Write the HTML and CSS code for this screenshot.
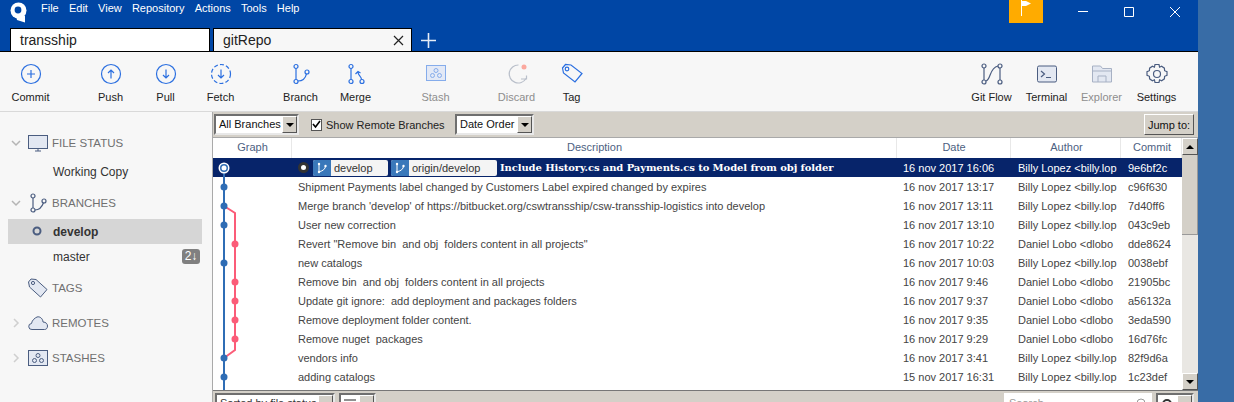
FILE: index.html
```html
<!DOCTYPE html>
<html lang="en">
<head>
  <meta charset="UTF-8">
  <title>gitRepo - Sourcetree</title>
  <link rel="stylesheet" href="styles.css">
</head>
<body>
  <div class="window">
    <header class="titlebar">
      <div class="menubar">
        <svg class="logo" width="17" height="21" viewBox="0 0 17 21"><circle cx="8.500" cy="8.500" r="8" fill="#fff"/><path d="M6 14h9v6.500L7 18z" fill="#fff"/><circle cx="8" cy="8" r="3.400" fill="#0046a5"/></svg>
        <nav class="menu">
          <span>File</span><span>Edit</span><span>View</span><span>Repository</span><span>Actions</span><span>Tools</span><span>Help</span>
        </nav>
        <div class="flag">
          <svg width="12" height="16" viewBox="0 0 12 16"><path d="M1.500 0v16" stroke="#fff" fill="none"/><path d="M2 1h4l5 2.500L6 6H2z" fill="#fff"/></svg>
        </div>
        <div class="winbtns">
          <svg width="12" height="12" viewBox="0 0 12 12"><path d="M1 5.500h10" stroke="#fff" fill="none"/></svg>
          <svg width="12" height="12" viewBox="0 0 12 12"><path d="M1.500 1.500h9v9h-9z" stroke="#fff" fill="none"/></svg>
          <svg width="12" height="12" viewBox="0 0 12 12"><path d="M1 1l10 10M11 1L1 11" stroke="#fff" fill="none"/></svg>
        </div>
      </div>
      <div class="tabs">
        <div class="tab">transship</div>
        <div class="tab tab-active">gitRepo
          <svg width="11" height="11" viewBox="0 0 11 11"><path d="M1 1l9 9M10 1l-9 9" stroke="#222" stroke-width="1.200" fill="none"/></svg>
        </div>
        <svg class="tab-add" width="15" height="15" viewBox="0 0 15 15"><path d="M7.500 0v15M0 7.500h15" stroke="#e6edf7" stroke-width="1.600" fill="none"/></svg>
      </div>
    </header>

    <div class="toolbar">
      <div class="tool">
        <svg width="22" height="22" viewBox="0 0 22 22"><circle cx="11" cy="11" r="9.500" class="ic-blue"/><path d="M11 7v8M7 11h8" class="ic-blue"/></svg>
        <span>Commit</span>
      </div>
      <div class="tool group-start">
        <svg width="22" height="22" viewBox="0 0 22 22"><circle cx="11" cy="11" r="9.500" class="ic-blue"/><path d="M11 15.500v-8M8 10l3-3 3 3" class="ic-blue"/></svg>
        <span>Push</span>
      </div>
      <div class="tool">
        <svg width="22" height="22" viewBox="0 0 22 22"><circle cx="11" cy="11" r="9.500" class="ic-blue"/><path d="M11 6.500v8M8 12l3 3 3-3" class="ic-blue"/></svg>
        <span>Pull</span>
      </div>
      <div class="tool">
        <svg width="22" height="22" viewBox="0 0 22 22"><circle cx="11" cy="11" r="9.500" class="ic-blue" stroke-dasharray="4 2.200"/><path d="M11 6.500v8M8 12l3 3 3-3" class="ic-blue"/></svg>
        <span>Fetch</span>
      </div>
      <div class="tool group-start">
        <svg width="22" height="22" viewBox="0 0 22 22"><circle cx="6" cy="3.500" r="2" class="ic-blue"/><circle cx="6" cy="18.500" r="2" class="ic-blue"/><circle cx="17" cy="9" r="2" class="ic-blue"/><path d="M6 5.500v11M8 18c5 0 7.500-3 8.500-7.200" class="ic-blue"/></svg>
        <span>Branch</span>
      </div>
      <div class="tool">
        <svg width="22" height="22" viewBox="0 0 22 22"><circle cx="6" cy="3.500" r="2" class="ic-blue"/><circle cx="6" cy="18.500" r="2" class="ic-blue"/><circle cx="17" cy="18.500" r="2" class="ic-blue"/><path d="M6 5.500v11M16.500 16.500c0-3-3-3.500-3.500-7M10.500 11l2.500-2.500 2.500 1.500" class="ic-blue"/></svg>
        <span>Merge</span>
      </div>
      <div class="tool group-start tool-off">
        <svg width="22" height="22" viewBox="0 0 22 22"><rect x="1.500" y="2.500" width="19" height="15" fill="#e3e9f6" stroke="#85aceb"/><circle cx="11" cy="7.500" r="2" fill="none" stroke="#85aceb"/><circle cx="7.500" cy="12.500" r="2" fill="none" stroke="#85aceb"/><circle cx="14.500" cy="12.500" r="2" fill="none" stroke="#85aceb"/></svg>
        <span>Stash</span>
      </div>
      <div class="tool tool-off tool-discard">
        <svg width="22" height="22" viewBox="0 0 22 22"><path d="M12.500 2a9 9 0 1 0 7.500 13.500" fill="none" stroke="#b9bfca" stroke-width="1.200"/><path d="M15 16h5.500v-3.500" fill="none" stroke="#b9bfca" stroke-width="1.200"/><circle cx="18" cy="4" r="2.500" fill="#fba89e"/></svg>
        <span>Discard</span>
      </div>
      <div class="tool tool-tag">
        <svg width="22" height="22" viewBox="0 0 22 22"><path d="M1.500 5l3-3.500 5.500.5 11 8.500-7 8.500L2.500 10z" class="ic-blue"/><circle cx="6" cy="6" r="1.800" class="ic-blue"/></svg>
        <span>Tag</span>
      </div>
      <div class="tool tool-right">
        <svg width="22" height="22" viewBox="0 0 22 22"><circle cx="3" cy="3" r="2" class="ic-slate"/><circle cx="3" cy="19" r="2" class="ic-slate"/><circle cx="19" cy="3" r="2" class="ic-slate"/><circle cx="19" cy="19" r="2" class="ic-slate"/><path d="M3 5v12M19 5v12M5 18c5-1 3-13 12-15" class="ic-slate"/></svg>
        <span>Git Flow</span>
      </div>
      <div class="tool">
        <svg width="22" height="22" viewBox="0 0 22 22"><rect x="1.500" y="3" width="19" height="16" rx="1.500" fill="#e3e8f2" stroke="#4b5d80"/><path d="M5 8l3.500 3L5 14M10 14.500h5" class="ic-slate"/></svg>
        <span>Terminal</span>
      </div>
      <div class="tool tool-off">
        <svg width="22" height="22" viewBox="0 0 22 22"><path d="M1.500 3h8l2 2.500h9V19h-19z" fill="#e3e8f2" stroke="#a7b1c4"/><path d="M1.500 8h19M7 19v-6h8v6" fill="none" stroke="#a7b1c4"/></svg>
        <span>Explorer</span>
      </div>
      <div class="tool">
        <svg width="22" height="22" viewBox="0 0 22 22"><path d="M9 1.500h4l.6 2.700 2-.9 2.800 1.900.2 2.500 2.400 1v3.600l-2.400 1-.2 2.500-2.800 1.900-2-.9-.6 2.700H9l-.6-2.700-2 .9-2.800-1.900-.2-2.500-2.400-1V8.700l2.400-1 .2-2.500 2.800-1.900 2 .9z" class="ic-slate"/><circle cx="11" cy="11" r="3.500" class="ic-slate"/></svg>
        <span>Settings</span>
      </div>
    </div>

    <div class="workspace">
      <aside class="sidebar">
        <div class="side-head side-first">
          <svg class="chev" width="10" height="10" viewBox="0 0 10 10"><path d="M1 3l4 4 4-4" stroke="#b5b5b5" stroke-width="1.500" fill="none"/></svg>
          <svg width="20" height="17" viewBox="0 0 20 17"><rect x=".5" y=".5" width="19" height="13" fill="#e3e8f2" stroke="#4b5d80"/><path d="M7 16h6M10 14v2" stroke="#4b5d80" fill="none"/></svg>
          <span>FILE STATUS</span>
        </div>
        <div class="side-item">Working Copy</div>
        <div class="side-head side-branches">
          <svg class="chev" width="10" height="10" viewBox="0 0 10 10"><path d="M1 3l4 4 4-4" stroke="#b5b5b5" stroke-width="1.500" fill="none"/></svg>
          <svg width="20" height="20" viewBox="0 0 20 20"><circle cx="5" cy="3" r="2" class="ic-slate"/><circle cx="5" cy="17" r="2" class="ic-slate"/><circle cx="16" cy="8" r="2" class="ic-slate"/><path d="M5 5v10M7 17c4 0 7-3 8.500-7.200" class="ic-slate"/></svg>
          <span>BRANCHES</span>
        </div>
        <div class="side-item side-current">
          <svg class="cur-dot" width="10" height="10" viewBox="0 0 10 10"><circle cx="5" cy="5" r="3.500" fill="none" stroke="#4b5d80" stroke-width="2"/></svg>
          develop
        </div>
        <div class="side-item side-master">master <span class="badge">2↓</span></div>
        <div class="side-head side-tags">
          <svg width="20" height="20" viewBox="0 0 20 20"><path d="M.5 4L3 1l5 .5 11 10-6.500 7.500L1.500 9z" fill="#e3e8f2" stroke="#4b5d80"/><circle cx="5" cy="5" r="1.600" fill="none" stroke="#4b5d80"/></svg>
          <span>TAGS</span>
        </div>
        <div class="side-head side-next">
          <svg class="chev" width="10" height="10" viewBox="0 0 10 10"><path d="M3 1l4 4-4 4" stroke="#cfcfcf" stroke-width="1.500" fill="none"/></svg>
          <svg width="20" height="14" viewBox="0 0 20 14"><path d="M4 13.500a3 3 0 0 1-.5-6C4 4 7 2 9 1c3-1 6 2 6 5 3 0 4.500 2 4.500 4s-1 3.500-3 3.500z" fill="#e3e8f2" stroke="#4b5d80"/></svg>
          <span>REMOTES</span>
        </div>
        <div class="side-head side-next">
          <svg class="chev" width="10" height="10" viewBox="0 0 10 10"><path d="M3 1l4 4-4 4" stroke="#cfcfcf" stroke-width="1.500" fill="none"/></svg>
          <svg width="20" height="16" viewBox="0 0 20 16"><rect x=".5" y=".5" width="19" height="15" fill="#e3e8f2" stroke="#4b5d80"/><circle cx="10" cy="5.500" r="2" fill="none" stroke="#4b5d80"/><circle cx="6.500" cy="10.500" r="2" fill="none" stroke="#4b5d80"/><circle cx="13.500" cy="10.500" r="2" fill="none" stroke="#4b5d80"/></svg>
          <span>STASHES</span>
        </div>
      </aside>

      <main class="history">
        <div class="filterbar">
          <div class="combo combo-branches">All Branches<i class="combo-btn"></i></div>
          <label class="check"><i class="check-box"><svg width="9" height="9" viewBox="0 0 9 9"><path d="M1 4l2.500 3L8 1" stroke="#000" stroke-width="1.600" fill="none"/></svg></i>Show Remote Branches</label>
          <div class="combo combo-order">Date Order<i class="combo-btn"></i></div>
          <button class="jump">Jump to:</button>
        </div>

        <div class="log">
          <div class="log-main">
            <div class="row row-head">
              <div class="col-graph">Graph</div>
              <div class="col-desc">Description</div>
              <div class="col-date">Date</div>
              <div class="col-author">Author</div>
              <div class="col-commit">Commit</div>
            </div>

            <div class="rows">
              <svg class="graph" width="40" height="234" viewBox="0 0 40 234">
                <path d="M12 10v224" stroke="#2f6db5" stroke-width="2" fill="none"/>
                <path d="M12 48l11 7v137l-11 8" stroke="#fb5c78" stroke-width="2" fill="none"/>
                <circle cx="12" cy="10" r="5.500" fill="#fff"/><circle cx="12" cy="10" r="4" fill="#2f6db5"/><circle cx="12" cy="10" r="2.500" fill="#fff"/>
                <circle cx="12" cy="29" r="3.500" fill="#2f6db5"/><circle cx="12" cy="48" r="3.500" fill="#2f6db5"/><circle cx="12" cy="67" r="3.500" fill="#2f6db5"/>
                <circle cx="23" cy="86" r="3.500" fill="#fb5c78"/><circle cx="12" cy="105" r="3.500" fill="#2f6db5"/><circle cx="23" cy="124" r="3.500" fill="#fb5c78"/>
                <circle cx="23" cy="143" r="3.500" fill="#fb5c78"/><circle cx="23" cy="162" r="3.500" fill="#fb5c78"/><circle cx="23" cy="181" r="3.500" fill="#fb5c78"/>
                <circle cx="12" cy="200" r="3.500" fill="#2f6db5"/><circle cx="12" cy="219" r="3.500" fill="#2f6db5"/>
              </svg>

              <div class="row row-sel">
                <div class="col-graph"></div>
                <div class="col-desc">
                  <i class="head-dot"></i>
                  <span class="ref"><i class="ref-ic"><svg width="12" height="12" viewBox="0 0 12 12"><circle cx="3" cy="2" r="1.200" fill="#fff"/><circle cx="3" cy="10" r="1.200" fill="#fff"/><circle cx="9.500" cy="4" r="1.200" fill="#fff"/><path d="M3 2v8M9.500 4c0 3-3 5-5.500 5.500" stroke="#fff" fill="none"/></svg></i>develop</span>
                  <span class="ref ref-wide"><i class="ref-ic"><svg width="12" height="12" viewBox="0 0 12 12"><circle cx="3" cy="2" r="1.200" fill="#fff"/><circle cx="3" cy="10" r="1.200" fill="#fff"/><circle cx="9.500" cy="4" r="1.200" fill="#fff"/><path d="M3 2v8M9.500 4c0 3-3 5-5.500 5.500" stroke="#fff" fill="none"/></svg></i>origin/develop</span>
                  <b class="subject">Include History.cs and Payments.cs to Model from obj folder</b>
                </div>
                <div class="col-date">16 nov 2017 16:06</div>
                <div class="col-author">Billy Lopez &lt;billy.lop</div>
                <div class="col-commit">9e6bf2c</div>
              </div>
              <div class="row">
                <div class="col-graph"></div>
                <div class="col-desc">Shipment Payments label changed by Customers Label expired changed by expires</div>
                <div class="col-date">16 nov 2017 13:17</div>
                <div class="col-author">Billy Lopez &lt;billy.lop</div>
                <div class="col-commit">c96f630</div>
              </div>
              <div class="row">
                <div class="col-graph"></div>
                <div class="col-desc">Merge branch 'develop' of https://bitbucket.org/cswtransship/csw-transship-logistics into develop</div>
                <div class="col-date">16 nov 2017 13:11</div>
                <div class="col-author">Billy Lopez &lt;billy.lop</div>
                <div class="col-commit">7d40ff6</div>
              </div>
              <div class="row">
                <div class="col-graph"></div>
                <div class="col-desc">User new correction</div>
                <div class="col-date">16 nov 2017 13:10</div>
                <div class="col-author">Billy Lopez &lt;billy.lop</div>
                <div class="col-commit">043c9eb</div>
              </div>
              <div class="row">
                <div class="col-graph"></div>
                <div class="col-desc">Revert "Remove bin  and obj  folders content in all projects"</div>
                <div class="col-date">16 nov 2017 10:22</div>
                <div class="col-author">Daniel Lobo &lt;dlobo</div>
                <div class="col-commit">dde8624</div>
              </div>
              <div class="row">
                <div class="col-graph"></div>
                <div class="col-desc">new catalogs</div>
                <div class="col-date">16 nov 2017 10:03</div>
                <div class="col-author">Billy Lopez &lt;billy.lop</div>
                <div class="col-commit">0038ebf</div>
              </div>
              <div class="row">
                <div class="col-graph"></div>
                <div class="col-desc">Remove bin  and obj  folders content in all projects</div>
                <div class="col-date">16 nov 2017 9:46</div>
                <div class="col-author">Daniel Lobo &lt;dlobo</div>
                <div class="col-commit">21905bc</div>
              </div>
              <div class="row">
                <div class="col-graph"></div>
                <div class="col-desc">Update git ignore:  add deployment and packages folders</div>
                <div class="col-date">16 nov 2017 9:37</div>
                <div class="col-author">Daniel Lobo &lt;dlobo</div>
                <div class="col-commit">a56132a</div>
              </div>
              <div class="row">
                <div class="col-graph"></div>
                <div class="col-desc">Remove deployment folder content.</div>
                <div class="col-date">16 nov 2017 9:35</div>
                <div class="col-author">Daniel Lobo &lt;dlobo</div>
                <div class="col-commit">3eda590</div>
              </div>
              <div class="row">
                <div class="col-graph"></div>
                <div class="col-desc">Remove nuget  packages</div>
                <div class="col-date">16 nov 2017 9:29</div>
                <div class="col-author">Daniel Lobo &lt;dlobo</div>
                <div class="col-commit">16d76fc</div>
              </div>
              <div class="row">
                <div class="col-graph"></div>
                <div class="col-desc">vendors info</div>
                <div class="col-date">16 nov 2017 3:41</div>
                <div class="col-author">Billy Lopez &lt;billy.lop</div>
                <div class="col-commit">82f9d6a</div>
              </div>
              <div class="row">
                <div class="col-graph"></div>
                <div class="col-desc">adding catalogs</div>
                <div class="col-date">15 nov 2017 16:31</div>
                <div class="col-author">Billy Lopez &lt;billy.lop</div>
                <div class="col-commit">1c23def</div>
              </div>
            </div>
          </div>

          <div class="scroll">
            <div class="scroll-btn"><i class="arrow-up"></i></div>
            <div class="scroll-thumb"></div>
            <div class="scroll-track"></div>
            <div class="scroll-btn"><i class="arrow-down"></i></div>
          </div>
        </div>

        <div class="bottombar">
          <div class="combo combo-filter">Sorted by file status<i class="combo-btn"></i></div>
          <div class="combo combo-view"><svg width="12" height="10" viewBox="0 0 12 10"><path d="M0 1h12M0 5h12M0 9h12" stroke="#222" fill="none"/></svg><i class="combo-btn"></i></div>
          <div class="search">Search
            <svg width="10" height="10" viewBox="0 0 10 10"><circle cx="5" cy="5" r="4" fill="none" stroke="#999"/></svg>
          </div>
          <div class="combo combo-gear"><svg width="12" height="12" viewBox="0 0 12 12"><circle cx="6" cy="6" r="4" fill="none" stroke="#333" stroke-width="2"/></svg><i class="combo-btn"></i></div>
        </div>
      </main>
    </div>
  </div>
</body>
</html>
```

FILE: styles.css
```css
html, body {
  margin: 0;
  height: 402px;
  overflow: hidden;
}
body {
  background: #386ca6;
  font-family: "Liberation Sans", Arial, sans-serif;
  font-size: 12px;
  color: #333;
}
svg {
  display: block;
  flex: none;
}
i {
  font-style: normal;
}
.ic-blue {
  fill: none;
  stroke: #2b6fe0;
  stroke-width: 1.200;
}
.ic-slate {
  fill: none;
  stroke: #4b5d80;
  stroke-width: 1.200;
}

.window {
  width: 1198px;
  height: 402px;
  background: #f7f7f7;
  display: flex;
  flex-direction: column;
}

/* title bar */
.titlebar {
  height: 52px;
  flex: none;
  box-sizing: border-box;
  background: #0046a5;
  border-bottom: 1px solid #000;
  display: flex;
  flex-direction: column;
  justify-content: space-between;
}
.menubar {
  height: 23px;
  display: flex;
  align-items: flex-start;
}
.logo {
  margin: 2px 0 0 10px;
}
.menu {
  display: flex;
  gap: 10.200px;
  margin: 1px 0 0 14px;
  color: #fff;
  font-size: 11px;
  line-height: 14px;
}
.flag {
  margin-left: auto;
  width: 34px;
  height: 23px;
  background: #ffab00;
  display: flex;
  justify-content: center;
}
.winbtns {
  display: flex;
  gap: 34px;
  margin: 6px 17px 0 34px;
}
.tabs {
  display: flex;
  align-items: flex-end;
  padding-left: 10px;
  gap: 3px;
}
.tab {
  width: 200px;
  height: 23px;
  background: #fff;
  border: 1px solid #000;
  border-bottom: 0;
  padding: 0 7px 0 9px;
  box-sizing: border-box;
  color: #222;
  font-size: 14px;
  line-height: 21px;
  display: flex;
  align-items: center;
  justify-content: space-between;
}
.tab-active {
  background: #f7f7f7;
  width: 199px;
}
.tab-add {
  margin: 0 0 3px 6px;
}

/* toolbar */
.toolbar {
  height: 60px;
  flex: none;
  box-sizing: border-box;
  display: flex;
  padding: 0 14px 0 3px;
  border-bottom: 1px solid #d9d9d9;
}
.tool {
  width: 55px;
  display: flex;
  flex-direction: column;
  align-items: center;
  padding-top: 11px;
  color: #222;
  font-size: 11px;
  line-height: 14px;
}
.tool span {
  margin-top: 5px;
}
.group-start {
  margin-left: 25px;
}
.tool-off {
  color: #8e8e8e;
}
.tool-discard {
  margin-left: 26px;
}
.tool-right {
  margin-left: auto;
}

/* sidebar */
.workspace {
  flex: 1;
  min-height: 0;
  display: flex;
}
.sidebar {
  width: 212px;
  flex: none;
  padding-top: 21px;
  box-sizing: border-box;
}
.side-head {
  height: 20px;
  display: flex;
  align-items: center;
  color: #707070;
  font-size: 11.500px;
  padding-left: 28px;
  position: relative;
}
.side-head span {
  position: absolute;
  left: 52px;
}
.chev {
  position: absolute;
  left: 11px;
  top: 5px;
}
.side-item {
  height: 25px;
  line-height: 26px;
  margin-left: 8px;
  width: 194px;
  padding-left: 45px;
  box-sizing: border-box;
  color: #333;
  position: relative;
}
.side-first + .side-item {
  margin-top: 6px;
}
.side-branches {
  margin-top: 9px;
}
.side-branches + .side-item {
  margin-top: 6px;
}
.side-current {
  background: #d6d6d6;
  font-weight: bold;
}
.cur-dot {
  position: absolute;
  left: 24px;
  top: 7px;
}
.side-master {
  display: flex;
  justify-content: space-between;
  align-items: center;
  padding-right: 2px;
}
.badge {
  width: 18px;
  height: 15px;
  line-height: 15px;
  background: #808080;
  color: #fff;
  border-radius: 3px;
  text-align: center;
  font-size: 12px;
}
.side-tags {
  margin-top: 9px;
}
.side-next {
  margin-top: 15px;
}

/* history */
.history {
  flex: 1;
  min-width: 0;
  display: flex;
  flex-direction: column;
  background: #d4d0c8;
  border-left: 1px solid #aaa;
  box-sizing: border-box;
  font-size: 11px;
}
.filterbar {
  height: 26px;
  flex: none;
  display: flex;
  align-items: center;
  padding: 0 4px 0 1px;
  border-bottom: 1px solid #a9a9a9;
  box-sizing: border-box;
}
.combo {
  height: 21px;
  box-sizing: border-box;
  background: #fff;
  border: 2px solid;
  border-color: #6f6f6f #e8e8e8 #e8e8e8 #6f6f6f;
  display: flex;
  align-items: center;
  justify-content: space-between;
  padding-left: 3px;
  color: #111;
  line-height: 17px;
  white-space: nowrap;
  overflow: hidden;
}
.combo-btn {
  width: 15px;
  height: 17px;
  flex: none;
  background: #d4d0c8;
  border: 1px solid #fff;
  border-right-color: #555;
  border-bottom-color: #555;
  box-sizing: border-box;
  display: flex;
  align-items: center;
  justify-content: center;
}
.combo-btn::after,
.arrow-down {
  content: "";
  border: 4px solid transparent;
  border-top: 4px solid #000;
  border-bottom: 0;
}
.arrow-up {
  border: 4px solid transparent;
  border-bottom: 4px solid #000;
  border-top: 0;
}
.combo-branches {
  width: 85px;
}
.check {
  width: 131px;
  display: flex;
  align-items: center;
  margin-left: 12px;
  color: #222;
  white-space: nowrap;
}
.check-box {
  width: 12px;
  height: 12px;
  box-sizing: border-box;
  background: #fff;
  border: 1px solid #555;
  margin-right: 4px;
  display: flex;
  align-items: center;
  justify-content: center;
}
.combo-order {
  width: 79px;
  margin-left: 13px;
}
.jump {
  margin-left: auto;
  width: 50px;
  height: 21px;
  padding: 0;
  background: #d4d0c8;
  border: 1px solid;
  border-color: #fff #555 #555 #fff;
  font: inherit;
  color: #111;
}

/* commit log */
.log {
  height: 252px;
  flex: none;
  display: flex;
  background: #fff;
}
.log-main {
  flex: 1;
  min-width: 0;
  overflow: hidden;
}
.row {
  height: 19px;
  display: grid;
  grid-template-columns: 79px 605px 114px 110px 61px;
  line-height: 20px;
  color: #444;
}
.row > div {
  white-space: pre;
  overflow: hidden;
  padding: 0 5px 0 6px;
  box-sizing: border-box;
}
.row > .col-author,
.row > .col-commit {
  padding-left: 7px;
}
.row-head {
  height: 20px;
  line-height: 18px;
  text-align: center;
  color: #4d6182;
}
.row-head > div {
  border-right: 1px solid #e8e8e8;
}
.rows {
  position: relative;
}
.graph {
  position: absolute;
  left: -1px;
  top: 0;
  z-index: 1;
}
.row-sel {
  background: #07246a;
  color: #fff;
}
.row-sel .col-desc {
  display: flex;
  align-items: center;
}
.head-dot {
  width: 5px;
  height: 5px;
  border-radius: 50%;
  background: #fff;
  border: 3px solid #333;
  margin-right: 4px;
}
.ref {
  width: 75px;
  height: 16px;
  line-height: 16px;
  background: #f4f4f4;
  color: #333;
  border-radius: 2px;
  display: flex;
  margin-right: 3px;
}
.ref-wide {
  width: 106px;
}
.ref-ic {
  width: 18px;
  background: #3a78ba;
  margin-right: 3px;
  display: flex;
  align-items: center;
  justify-content: center;
  border-radius: 2px 0 0 2px;
}
.subject {
  font-family: "DejaVu Serif", serif;
  font-size: 10px;
  letter-spacing: -.1px;
}

/* scrollbar */
.scroll {
  width: 16px;
  flex: none;
  display: flex;
  flex-direction: column;
  background: #e9e7e3;
}
.scroll-btn {
  height: 17px;
  background: #d4d0c8;
  border: 1px solid;
  border-color: #fff #555 #555 #fff;
  box-sizing: border-box;
  display: flex;
  align-items: center;
  justify-content: center;
}
.scroll-thumb {
  height: 80px;
  background: #d4d0c8;
  border-right: 1px solid #999;
  border-bottom: 1px solid #999;
  box-sizing: border-box;
}
.scroll-track {
  flex: 1;
}

/* bottom filter bar */
.bottombar {
  flex: 1;
  display: flex;
  align-items: flex-start;
  padding: 2px 4px 0 2px;
  border-top: 1px solid #777;
  gap: 4px;
}
.combo-filter {
  width: 120px;
  color: #333;
}
.combo-view {
  width: 37px;
}
.search {
  margin-left: auto;
  width: 148px;
  height: 20px;
  background: #fff;
  color: #999;
  padding: 0 6px 0 5px;
  box-sizing: border-box;
  display: flex;
  align-items: center;
  justify-content: space-between;
}
.combo-gear {
  width: 38px;
}
```
